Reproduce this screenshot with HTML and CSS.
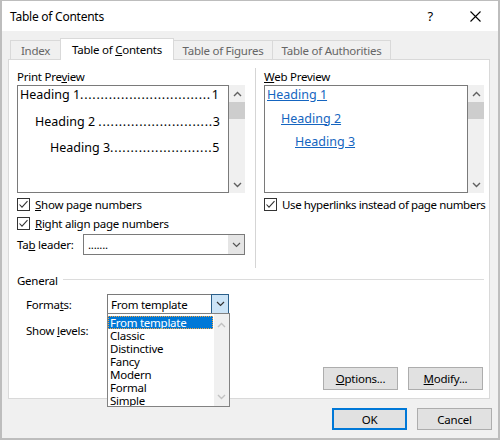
FILE: index.html
```html
<!DOCTYPE html>
<html>
<head>
<meta charset="utf-8">
<link rel="stylesheet" href="styles.css">
</head>
<body>
<div class="win">
  <div class="titlebar">
    <span class="title">Table of Contents</span>
    <span class="help">?</span>
    <svg class="close" width="11" height="11" viewBox="0 0 11 11"><path d="M0.5 0.5 L10.5 10.5 M10.5 0.5 L0.5 10.5" stroke="#000" stroke-width="1.1" fill="none"/></svg>
  </div>
  <div class="body">
    <div class="tabs">
      <div class="tab t-index"><span>Index</span></div>
      <div class="tab t-sel"><span>Table of <u>C</u>ontents</span></div>
      <div class="tab t-fig"><span>Table of Figures</span></div>
      <div class="tab t-auth"><span>Table of Authorities</span></div>
    </div>
    <div class="panel">
      <div class="top">
        <div class="col left">
          <div class="lbl">Print Pre<u>v</u>iew</div>
          <div class="pv">
            <div class="pvbox print">
              <div class="toc r1"><span>Heading 1</span><span class="dots">................................</span><span class="num">1</span></div>
              <div class="toc r2"><span>Heading 2&nbsp;</span><span class="dots">............................</span><span class="num">3</span></div>
              <div class="toc r3"><span>Heading 3</span><span class="dots">.........................</span><span class="num">5</span></div>
            </div>
            <div class="sb">
              <svg class="arr" width="9" height="6" viewBox="0 0 9 6"><polyline points="1,5 4.5,1.5 8,5" stroke="#606060" stroke-width="1.4" fill="none"/></svg>
              <div class="thumb"></div>
              <div class="sbfill"></div>
              <svg class="arr" width="9" height="6" viewBox="0 0 9 6"><polyline points="1,1 4.5,4.5 8,1" stroke="#606060" stroke-width="1.4" fill="none"/></svg>
            </div>
          </div>
          <div class="chkrow">
            <svg class="cb" width="13" height="13" viewBox="0 0 13 13"><rect x="0.5" y="0.5" width="12" height="12" fill="#fff" stroke="#333"/><polyline points="2.5,6.5 5,9.2 10.5,3.2" stroke="#333" stroke-width="1.1" fill="none"/></svg>
            <span><u>S</u>how page numbers</span>
          </div>
          <div class="chkrow">
            <svg class="cb" width="13" height="13" viewBox="0 0 13 13"><rect x="0.5" y="0.5" width="12" height="12" fill="#fff" stroke="#333"/><polyline points="2.5,6.5 5,9.2 10.5,3.2" stroke="#333" stroke-width="1.1" fill="none"/></svg>
            <span><u>R</u>ight align page numbers</span>
          </div>
          <div class="leadrow">
            <span class="leadlbl">Ta<u>b</u> leader:</span>
            <div class="combo lead">
              <span class="ctext">.......</span>
              <div class="cbtn gray">
                <svg width="9" height="6" viewBox="0 0 9 6"><polyline points="1,1 4.5,4.5 8,1" stroke="#555" stroke-width="1.2" fill="none"/></svg>
              </div>
            </div>
          </div>
        </div>
        <div class="vsep"></div>
        <div class="col right">
          <div class="lbl"><u>W</u>eb Preview</div>
          <div class="pv">
            <div class="pvbox web">
              <div class="lnk w1"><a>Heading 1</a></div>
              <div class="lnk w2"><a>Heading 2</a></div>
              <div class="lnk w3"><a>Heading 3</a></div>
            </div>
            <div class="sb">
              <svg class="arr" width="9" height="6" viewBox="0 0 9 6"><polyline points="1,5 4.5,1.5 8,5" stroke="#606060" stroke-width="1.4" fill="none"/></svg>
              <div class="thumb"></div>
              <div class="sbfill"></div>
              <svg class="arr" width="9" height="6" viewBox="0 0 9 6"><polyline points="1,1 4.5,4.5 8,1" stroke="#606060" stroke-width="1.4" fill="none"/></svg>
            </div>
          </div>
          <div class="chkrow wide">
            <svg class="cb" width="13" height="13" viewBox="0 0 13 13"><rect x="0.5" y="0.5" width="12" height="12" fill="#fff" stroke="#333"/><polyline points="2.5,6.5 5,9.2 10.5,3.2" stroke="#333" stroke-width="1.1" fill="none"/></svg>
            <span>Use hyperlinks instead of page numbers</span>
          </div>
        </div>
      </div>
      <div class="general">
        <div class="ghead"><span>General</span><div class="gline"></div></div>
        <div class="frow">
          <span class="flbl">Forma<u>t</u>s:</span>
          <div class="combo fmt">
            <span class="ctext">From template</span>
            <div class="cbtn blue">
              <svg width="9" height="6" viewBox="0 0 9 6"><polyline points="1,1 4.5,4.5 8,1" stroke="#333" stroke-width="1.2" fill="none"/></svg>
            </div>
          </div>
        </div>
        <div class="frow lv">
          <span class="flbl">Show <u>l</u>evels:</span>
        </div>
        <div class="btns inner">
          <div class="btn"><span><u>O</u>ptions...</span></div>
          <div class="btn"><span><u>M</u>odify...</span></div>
        </div>
      </div>
      <div class="dropdown">
        <div class="items">
          <div class="item hl">From template</div>
          <div class="item">Classic</div>
          <div class="item">Distinctive</div>
          <div class="item">Fancy</div>
          <div class="item">Modern</div>
          <div class="item">Formal</div>
          <div class="item">Simple</div>
        </div>
        <div class="dsb">
          <svg width="9" height="6" viewBox="0 0 9 6"><polyline points="1,5 4.5,1.5 8,5" stroke="#c2c2c2" stroke-width="1.4" fill="none"/></svg>
          <svg width="9" height="6" viewBox="0 0 9 6"><polyline points="1,1 4.5,4.5 8,1" stroke="#c2c2c2" stroke-width="1.4" fill="none"/></svg>
        </div>
      </div>
    </div>
    <div class="btns outer">
      <div class="btn ok"><span>OK</span></div>
      <div class="btn"><span>Cancel</span></div>
    </div>
  </div>
</div>
</body>
</html>
```

FILE: styles.css
```css
html, body {
  margin: 0;
  padding: 0;
}
body {
  font-family: "Noto Sans", "Open Sans", sans-serif;
  font-size: 11.5px;
  letter-spacing: -0.25px;
  color: #000;
}
.win {
  width: 500px;
  height: 440px;
  box-sizing: border-box;
  border: 2px solid #bdbdbd;
  border-top: 1px solid #bdbdbd;
  background: #f0f0f0;
  display: flex;
  flex-direction: column;
}
.titlebar {
  height: 30px;
  flex: none;
  background: #fff;
  display: flex;
  align-items: center;
  padding-left: 8px;
}
.title {
  font-size: 12px;
}
.help {
  margin-left: auto;
  font-size: 13px;
}
.close {
  margin-left: 37px;
  margin-right: 17px;
}
.body {
  flex: 1;
  padding: 7px 6px 0 6px;
  position: relative;
}
.tabs {
  display: flex;
  align-items: flex-start;
  height: 22px;
  margin-left: 2px;
  margin-bottom: -1px;
  position: relative;
  z-index: 1;
}
.tab {
  box-sizing: border-box;
  height: 19px;
  margin-top: 2px;
  border-top: 1px solid #d9d9d9;
  color: #666;
  display: flex;
  align-items: center;
  justify-content: center;
  padding-top: 1px;
  white-space: nowrap;
}
.t-index {
  width: 50px;
  border-left: 1px solid #d9d9d9;
}
.t-sel {
  width: 114px;
  height: 22px;
  margin-top: 0;
  background: #fff;
  color: #000;
  border: 1px solid #d9d9d9;
  border-bottom: none;
  padding-top: 0;
}
.t-fig {
  width: 99px;
  border-right: 1px solid #d9d9d9;
}
.t-auth {
  width: 118px;
  border-right: 1px solid #d9d9d9;
}
.panel {
  box-sizing: border-box;
  width: 482px;
  height: 340px;
  border: 1px solid #d9d9d9;
  background: #fff;
  position: relative;
}
.top {
  display: flex;
  padding: 8px 0 0 8px;
  height: 200px;
}
.col.left {
  width: 228px;
}
.col.right {
  width: 220px;
  margin-left: 8px;
}
.vsep {
  width: 1px;
  background: #d5d5d5;
  margin-left: 10px;
  height: 200px;
}
.lbl {
  height: 17px;
  line-height: 17px;
}
.pv {
  display: flex;
  height: 108px;
}
.pvbox {
  flex: 1;
  border: 1px solid #7a7a7a;
  background: #fff;
  overflow: hidden;
}
.sb {
  width: 16px;
  background: #f0f0f0;
  display: flex;
  flex-direction: column;
  align-items: center;
}
.sb .arr {
  margin: 6px 0 5px;
  flex: none;
}
.thumb {
  width: 16px;
  height: 17px;
  background: #cdcdcd;
  flex: none;
}
.sbfill {
  flex: 1;
}
.print {
  padding: 0 9px 0 2px;
  font-size: 12.5px;
  letter-spacing: 0;
}
.toc {
  display: flex;
  height: 18px;
  line-height: 18px;
  white-space: nowrap;
}
.toc .dots {
  letter-spacing: 0.74px;
}
.toc .num {
  margin-left: auto;
}
.r2 {
  padding-left: 15px;
  margin-top: 9px;
}
.r3 {
  padding-left: 30px;
  margin-top: 8px;
}
.web {
  padding-left: 2px;
  font-size: 12.5px;
  letter-spacing: 0;
}
.lnk {
  height: 18px;
  line-height: 18px;
}
.lnk a {
  color: #1565c0;
  text-decoration: underline;
}
.w2 {
  padding-left: 14px;
  margin-top: 5.5px;
}
.w3 {
  padding-left: 28px;
  margin-top: 5.5px;
}
.chkrow {
  display: flex;
  align-items: center;
  height: 19px;
  white-space: nowrap;
}
.pv + .chkrow {
  margin-top: 2px;
}
.chkrow.wide {
  letter-spacing: -0.38px;
}
.cb {
  flex: none;
  margin-right: 5px;
}
.leadrow {
  display: flex;
  align-items: center;
  margin-top: 1px;
}
.leadlbl {
  width: 66px;
}
.combo {
  box-sizing: border-box;
  display: flex;
  align-items: stretch;
  border: 1px solid #7a7a7a;
  background: #fff;
}
.combo.lead {
  width: 162px;
  height: 21px;
}
.ctext {
  flex: 1;
  padding-left: 4px;
  display: flex;
  align-items: center;
}
.cbtn {
  width: 16px;
  display: flex;
  align-items: center;
  justify-content: center;
}
.cbtn.gray {
  background: #e5e5e5;
}
.general {
  padding: 4px 0 0 8px;
}
.ghead {
  display: flex;
  align-items: center;
  height: 16px;
}
.gline {
  flex: 1;
  height: 1px;
  background: #dcdcdc;
  margin: 0 5px 0 5px;
  position: relative;
  top: -1px;
}
.frow {
  display: flex;
  align-items: center;
  height: 20px;
  margin-top: 6px;
  padding-left: 9px;
}
.flbl {
  margin-right: auto;
}
.frow .combo {
  margin-right: 260px;
}
.combo.fmt {
  width: 122px;
  height: 20px;
}
.combo.fmt .ctext {
  padding-left: 3px;
}
.cbtn.blue {
  width: 18px;
  box-sizing: border-box;
  background: #cce4f7;
  border: 1px solid #2b5f8a;
  margin: -1px -1px -1px 0;
}
.btns {
  display: flex;
  justify-content: flex-end;
  gap: 10px;
}
.btns.inner {
  margin-top: 27px;
  padding-right: 6px;
}
.btns.outer {
  margin-top: 9px;
}
.btn {
  box-sizing: border-box;
  width: 75px;
  height: 23px;
  border: 1px solid #adadad;
  background: #e1e1e1;
  display: flex;
  align-items: center;
  justify-content: center;
}
.btns.outer .btn {
  height: 22px;
}
.btn.ok {
  border: 2px solid #0078d7;
}
.dropdown {
  position: absolute;
  left: 98px;
  top: 253px;
  width: 123px;
  height: 94px;
  box-sizing: border-box;
  border: 1px solid #828282;
  background: #fff;
  display: flex;
  overflow: hidden;
  z-index: 2;
}
.items {
  flex: 1;
  padding-top: 2px;
}
.item {
  height: 13px;
  line-height: 13px;
  padding-left: 2px;
  white-space: nowrap;
}
.item.hl {
  background: #0078d7;
  color: #fff;
  outline: 1px dotted #f7a541;
  outline-offset: -1px;
  margin-right: 1px;
}
.dsb {
  width: 15px;
  background: #f0f0f0;
  display: flex;
  flex-direction: column;
  align-items: center;
  justify-content: space-between;
  padding: 8px 0 6px;
}
```
